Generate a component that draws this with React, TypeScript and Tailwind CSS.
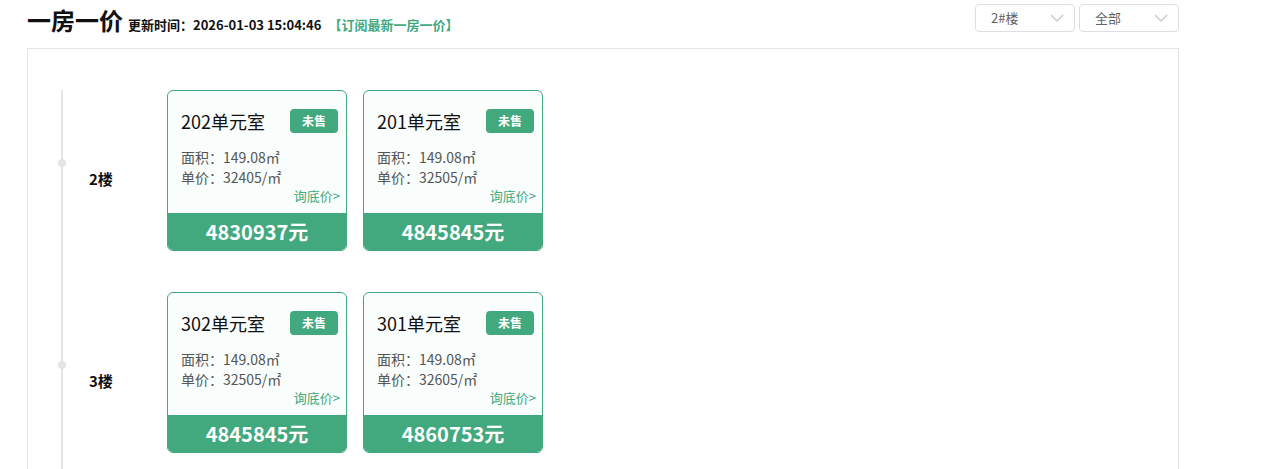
import React from "react";

const G = "#42a87e";

type Room = { name: string; area: string; unit: string; total: string };

const rows: { floor: string; rooms: Room[] }[] = [
  {
    floor: "2楼",
    rooms: [
      { name: "202单元室", area: "149.08㎡", unit: "32405/㎡", total: "4830937元" },
      { name: "201单元室", area: "149.08㎡", unit: "32505/㎡", total: "4845845元" },
    ],
  },
  {
    floor: "3楼",
    rooms: [
      { name: "302单元室", area: "149.08㎡", unit: "32505/㎡", total: "4845845元" },
      { name: "301单元室", area: "149.08㎡", unit: "32605/㎡", total: "4860753元" },
    ],
  },
];

function Chevron() {
  return (
    <svg width="14" height="8" viewBox="0 0 14 8" fill="none">
      <path d="M1 1l6 6 6-6" stroke="#c0c4cc" strokeWidth="1.2" />
    </svg>
  );
}

function Select({ label }: { label: string }) {
  return (
    <div className="w-[100px] h-[28px] border border-[#dcdfe6] rounded-[4px] flex items-center justify-between pl-[15px] pr-[10px] text-[13px] text-[#606266] bg-white">
      <span>{label}</span>
      <Chevron />
    </div>
  );
}

function Card({ r }: { r: Room }) {
  return (
    <div className="w-[180px] h-[161px] border border-[#42a87e] rounded-[6px] bg-[#f9fdfb] overflow-hidden flex flex-col">
      <div className="flex-1 flex flex-col">
        <div className="flex items-center justify-between pl-[13px] pr-[8px] pt-[18px]">
          <span className="text-[18px] leading-[24px] text-[#111]">{r.name}</span>
          <span className="w-[48px] h-[24px] rounded-[4px] bg-[#42a87e] text-white text-[12px] font-bold flex items-center justify-center">
            未售
          </span>
        </div>
        <div className="pl-[13px] mt-[14px] text-[14px] leading-[20px] text-[#555]">
          <div>面积：{r.area}</div>
          <div>单价：{r.unit}</div>
        </div>
        <div className="text-right pr-[6px] text-[13px] leading-[18px] text-[#42a87e]">询底价&gt;</div>
      </div>
      <div className="h-[37px] bg-[#42a87e] text-white text-[20px] font-bold flex items-center justify-center">
        {r.total}
      </div>
    </div>
  );
}

export default function App() {
  return (
    <div
      className="w-[1269px] h-[469px] bg-white overflow-hidden"
      style={{ fontFamily: '"Noto Sans CJK SC", "Noto Sans", sans-serif' }}
    >
      <div className="ml-[27px] w-[1152px]">
        <div className="h-[48px] flex justify-between">
          <div className="flex items-baseline pt-[4px]">
            <span className="text-[24px] leading-[32px] font-bold text-[#111]">一房一价</span>
            <span className="ml-[5px] text-[13px] font-bold text-[#111]">更新时间：2026-01-03 15:04:46</span>
            <span className="ml-[7px] text-[13px] font-bold" style={{ color: G }}>
              【订阅最新一房一价】
            </span>
          </div>
          <div className="flex gap-[4px] pt-[4px]">
            <Select label="2#楼" />
            <Select label="全部" />
          </div>
        </div>
        <div className="border border-[#e5e5e5] h-[430px] pt-[41px] pl-[33px]">
          {rows.map((row) => (
            <div key={row.floor} className="flex h-[202px]">
              <div className="relative w-[106px] border-l-2 border-[#e4e4e4]">
                <div className="absolute left-[-5px] top-[69px] w-[8px] h-[8px] rounded-full bg-[#e4e4e4]" />
                <div className="pt-[77px] pl-[26px] text-[15px] leading-[24px] font-bold text-[#111]">{row.floor}</div>
              </div>
              <div className="flex gap-[16px]">
                {row.rooms.map((r) => (
                  <Card key={r.name} r={r} />
                ))}
              </div>
            </div>
          ))}
        </div>
      </div>
    </div>
  );
}
